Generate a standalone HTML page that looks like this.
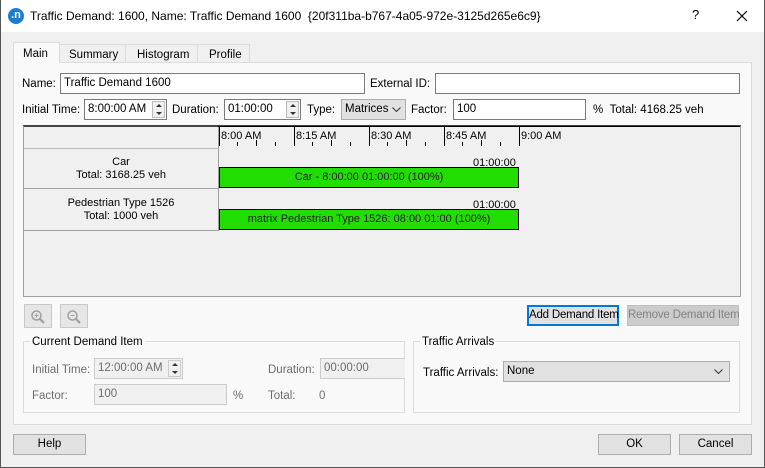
<!DOCTYPE html>
<html><head><meta charset="utf-8"><style>
*{box-sizing:border-box}
body{margin:0;width:765px;height:468px;background:#f0f0f0;font-family:"Liberation Sans",sans-serif;font-size:11.5px;color:#000;position:relative;overflow:hidden}
.a{position:absolute}
.inp{position:absolute;background:#fff;border:1px solid #7a7a7a;height:21px;padding:2px 3px;line-height:15px;white-space:nowrap}
.dis{background:#f0f0f0;border-color:#ccc;color:#6d6d6d}
.lbl{position:absolute;line-height:14px;white-space:nowrap}
.gl{color:#6d6d6d}
.btn{position:absolute;background:#e1e1e1;border:1px solid #adadad;text-align:center;line-height:19px;height:21px;white-space:nowrap}
.spin{position:absolute;right:1px;top:1px;width:13px;height:17px;border:1px solid #bbb;background:#f0f0f0}
.spin:before{content:"";position:absolute;left:3px;top:2px;border:3px solid transparent;border-bottom:3px solid #333;border-top:0}
.spin:after{content:"";position:absolute;left:3px;bottom:2px;border:3px solid transparent;border-top:3px solid #333;border-bottom:0}
.bar{position:absolute;left:219px;width:300px;height:21px;background:#22dd00;border:1px solid #000;text-align:center;line-height:19px;font-size:11px;color:#222;white-space:nowrap}
.tick{position:absolute;width:1px;background:#000}
</style></head><body>
<div class="a" style="left:0;top:0;width:765px;height:32px;background:#fff"></div>
<div class="a" style="left:8px;top:8px;width:16px;height:16px;border-radius:50%;background:#1a7fd4;color:#fff;font-size:11px;line-height:14px;text-align:center;font-weight:bold">.n</div>
<div class="lbl" style="left:30px;top:9px;font-size:12px">Traffic Demand: 1600, Name: Traffic Demand 1600 &nbsp;{20f311ba-b767-4a05-972e-3125d265e6c9}</div>
<div class="lbl" style="left:692px;top:8px;font-size:13px">?</div>
<svg class="a" style="left:736px;top:10px" width="12" height="12"><path d="M1 1L11 11M11 1L1 11" stroke="#000" stroke-width="1.2"/></svg>
<div class="a" style="left:0;top:0;width:1px;height:468px;background:#555"></div>
<div class="a" style="left:764px;top:0;width:1px;height:468px;background:#555"></div>
<div class="a" style="left:0;top:467px;width:765px;height:1px;background:#555"></div>

<div class="a" style="left:13px;top:62px;width:739px;height:363px;background:#f9f9f9;border:1px solid #dcdcdc"></div>
<div class="a" style="left:13px;top:42px;width:47px;height:21px;background:#f9f9f9;border:1px solid #dcdcdc;border-bottom:none"></div>
<div class="lbl" style="left:23px;top:47px">Main</div>
<div class="a" style="left:59px;top:44px;width:67px;height:19px;background:#f0f0f0;border:1px solid #dcdcdc"></div>
<div class="lbl" style="left:69px;top:48px">Summary</div>
<div class="a" style="left:125px;top:44px;width:73px;height:19px;background:#f0f0f0;border:1px solid #dcdcdc"></div>
<div class="lbl" style="left:137px;top:48px">Histogram</div>
<div class="a" style="left:197px;top:44px;width:53px;height:19px;background:#f0f0f0;border:1px solid #dcdcdc"></div>
<div class="lbl" style="left:209px;top:48px">Profile</div>

<div class="lbl" style="left:22px;top:77px">Name:</div>
<div class="inp" style="left:60px;top:73px;width:305px">Traffic Demand 1600</div>
<div class="lbl" style="left:370px;top:77px">External ID:</div>
<div class="inp" style="left:435px;top:73px;width:305px"></div>

<div class="lbl" style="left:22px;top:103px">Initial Time:</div>
<div class="inp" style="left:84px;top:99px;width:83px">8:00:00 AM<div class="spin"></div></div>
<div class="lbl" style="left:172px;top:103px">Duration:</div>
<div class="inp" style="left:224px;top:99px;width:77px">01:00:00<div class="spin"></div></div>
<div class="lbl" style="left:307px;top:103px">Type:</div>
<div class="inp" style="left:341px;top:99px;width:65px;background:#e1e1e1;border-color:#adadad">Matrices<svg style="position:absolute;right:4px;top:7px" width="9" height="5"><path d="M0.5 0.5L4.5 4.5L8.5 0.5" stroke="#333" fill="none"/></svg></div>
<div class="lbl" style="left:411px;top:103px">Factor:</div>
<div class="inp" style="left:453px;top:99px;width:133px">100</div>
<div class="lbl" style="left:593px;top:103px">% &nbsp;Total: 4168.25 veh</div>

<div class="a" style="left:23px;top:125px;width:718px;height:172px;background:#f0f0f0;border:1px solid #a0a0a0;border-top:2px solid #444"></div>
<div class="a" style="left:218px;top:126px;width:1px;height:105px;background:#a0a0a0"></div>
<div class="a" style="left:218px;top:126px;width:522px;height:1px;background:#000"></div>
<div class="a" style="left:24px;top:148px;width:194px;height:1px;background:#bbb"></div>
<div class="a" style="left:24px;top:188px;width:194px;height:1px;background:#a0a0a0"></div>
<div class="a" style="left:24px;top:230px;width:194px;height:1px;background:#a0a0a0"></div>
<div class="lbl" style="left:221px;top:129px;font-size:11px">8:00 AM</div>
<div class="lbl" style="left:296px;top:129px;font-size:11px">8:15 AM</div>
<div class="lbl" style="left:371px;top:129px;font-size:11px">8:30 AM</div>
<div class="lbl" style="left:446px;top:129px;font-size:11px">8:45 AM</div>
<div class="lbl" style="left:521px;top:129px;font-size:11px">9:00 AM</div>
<div class="tick" style="left:219px;top:127px;height:19px"></div>
<div class="tick" style="left:294px;top:127px;height:19px"></div>
<div class="tick" style="left:369px;top:127px;height:19px"></div>
<div class="tick" style="left:444px;top:127px;height:19px"></div>
<div class="tick" style="left:519px;top:127px;height:19px"></div>
<div class="tick" style="left:237px;top:142px;height:4px"></div>
<div class="tick" style="left:256px;top:140px;height:6px"></div>
<div class="tick" style="left:275px;top:142px;height:4px"></div>
<div class="tick" style="left:312px;top:142px;height:4px"></div>
<div class="tick" style="left:331px;top:140px;height:6px"></div>
<div class="tick" style="left:350px;top:142px;height:4px"></div>
<div class="tick" style="left:387px;top:142px;height:4px"></div>
<div class="tick" style="left:406px;top:140px;height:6px"></div>
<div class="tick" style="left:425px;top:142px;height:4px"></div>
<div class="tick" style="left:462px;top:142px;height:4px"></div>
<div class="tick" style="left:481px;top:140px;height:6px"></div>
<div class="tick" style="left:500px;top:142px;height:4px"></div>
<div class="lbl" style="left:24px;top:156px;width:194px;text-align:center;font-size:11px;line-height:13px">Car<br>Total: 3168.25 veh</div>
<div class="lbl" style="left:24px;top:197px;width:194px;text-align:center;font-size:11px;line-height:13px">Pedestrian Type 1526<br>Total: 1000 veh</div>
<div class="lbl" style="left:473px;top:156px;font-size:11px">01:00:00</div>
<div class="bar" style="top:167px">Car - 8:00:00 01:00:00 (100%)</div>
<div class="lbl" style="left:473px;top:198px;font-size:11px">01:00:00</div>
<div class="bar" style="top:209px">matrix Pedestrian Type 1526: 08:00 01:00 (100%)</div>

<div class="btn" style="left:24px;top:304px;width:28px;height:24px;border-color:#c8c8c8;background:#e6e6e6"><svg style="position:absolute;left:5px;top:4px" width="17" height="17"><circle cx="6.5" cy="6.5" r="4.5" fill="none" stroke="#a0a0a0" stroke-width="1.5"/><path d="M9.5 9.5L14 14" stroke="#a0a0a0" stroke-width="2.2"/><path d="M4.5 6.5h4M6.5 4.5v4" stroke="#a0a0a0"/></svg></div>
<div class="btn" style="left:60px;top:304px;width:28px;height:24px;border-color:#c8c8c8;background:#e6e6e6"><svg style="position:absolute;left:5px;top:4px" width="17" height="17"><circle cx="6.5" cy="6.5" r="4.5" fill="none" stroke="#a0a0a0" stroke-width="1.5"/><path d="M9.5 9.5L14 14" stroke="#a0a0a0" stroke-width="2.2"/><path d="M4.5 6.5h4" stroke="#a0a0a0"/></svg></div>
<div class="btn" style="left:527px;top:305px;width:92px;height:21px;border:2px solid #0078d7;line-height:17px;font-size:11.5px;letter-spacing:-0.2px">Add Demand Item</div>
<div class="btn" style="left:627px;top:305px;width:112px;background:#ccc;border-color:#bfbfbf;color:#838383;font-size:11.5px;letter-spacing:-0.2px">Remove Demand Item</div>

<div class="a" style="left:23px;top:341px;width:382px;height:72px;border:1px solid #dcdcdc"></div>
<div class="lbl" style="left:30px;top:335px;background:#f9f9f9;padding:0 2px">Current Demand Item</div>
<div class="lbl gl" style="left:32px;top:363px">Initial Time:</div>
<div class="inp dis" style="left:94px;top:358px;width:89px">12:00:00 AM<div class="spin" style="border-color:#ccc"></div></div>
<div class="lbl gl" style="left:268px;top:363px">Duration:</div>
<div class="inp dis" style="left:320px;top:358px;width:85px;border-right:none">00:00:00</div>
<div class="lbl gl" style="left:32px;top:389px">Factor:</div>
<div class="inp dis" style="left:94px;top:384px;width:133px">100</div>
<div class="lbl gl" style="left:233px;top:389px">%</div>
<div class="lbl gl" style="left:268px;top:389px">Total:</div>
<div class="lbl gl" style="left:319px;top:389px">0</div>

<div class="a" style="left:413px;top:341px;width:327px;height:72px;border:1px solid #dcdcdc"></div>
<div class="lbl" style="left:420px;top:335px;background:#f9f9f9;padding:0 2px">Traffic Arrivals</div>
<div class="lbl" style="left:423px;top:366px">Traffic Arrivals:</div>
<div class="inp" style="left:503px;top:361px;width:227px;background:#e1e1e1;border-color:#adadad">None<svg style="position:absolute;right:6px;top:7px" width="9" height="5"><path d="M0.5 0.5L4.5 4.5L8.5 0.5" stroke="#333" fill="none"/></svg></div>

<div class="btn" style="left:13px;top:434px;width:73px">Help</div>
<div class="btn" style="left:598px;top:434px;width:73px">OK</div>
<div class="btn" style="left:679px;top:434px;width:73px">Cancel</div>
</body></html>
